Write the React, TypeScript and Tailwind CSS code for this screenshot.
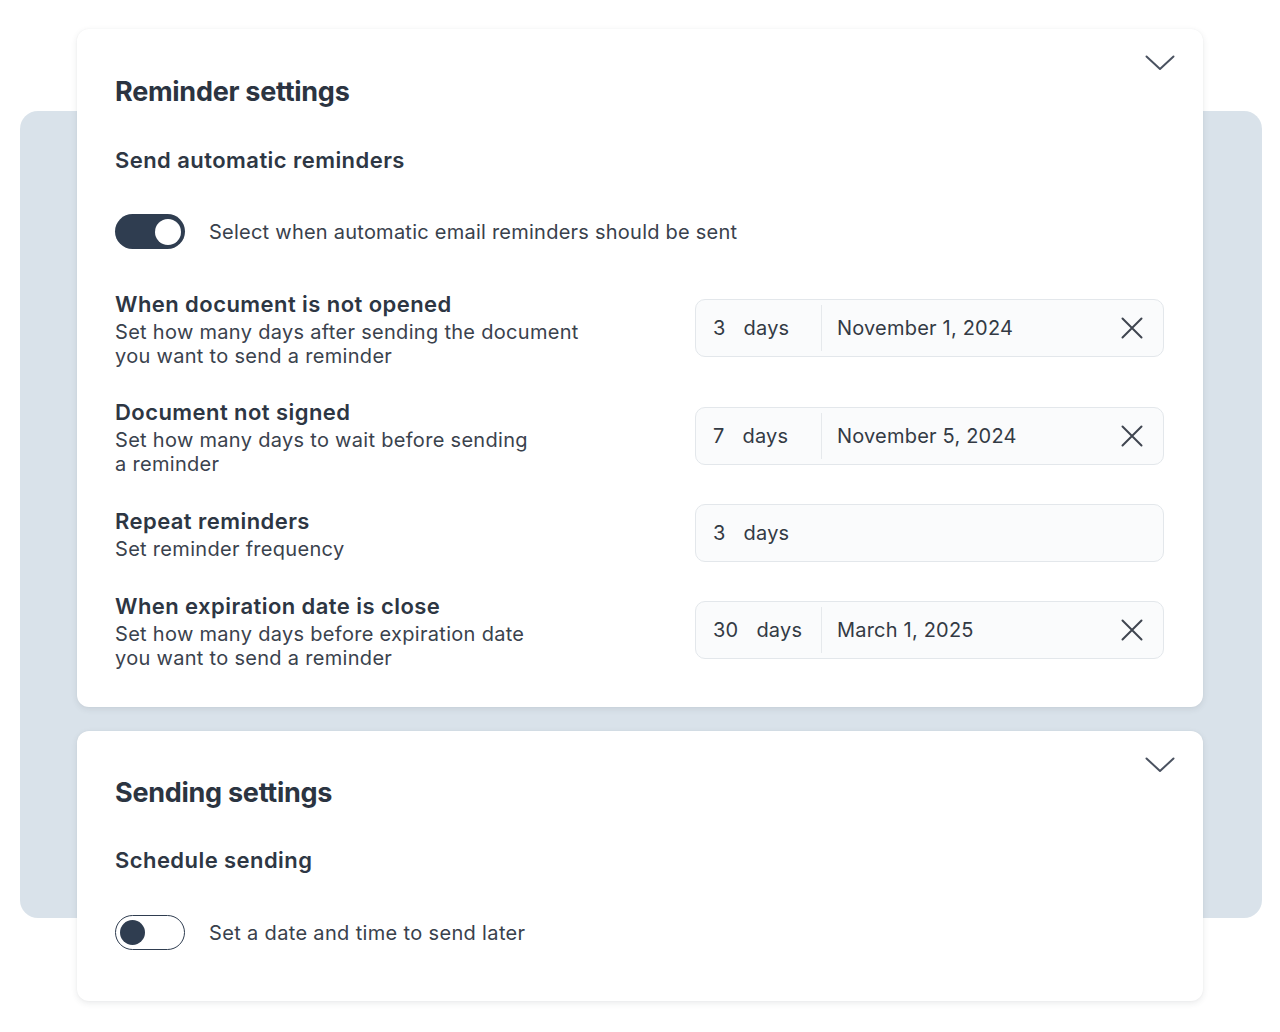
import React from 'react';

interface ReminderRow {
  title: string;
  lines: string[];
  count: string;
  date?: string;
}

const rows: ReminderRow[] = [
  {
    title: 'When document is not opened',
    lines: ['Set how many days after sending the document', 'you want to send a reminder'],
    count: '3',
    date: 'November 1, 2024',
  },
  {
    title: 'Document not signed',
    lines: ['Set how many days to wait before sending', 'a reminder'],
    count: '7',
    date: 'November 5, 2024',
  },
  {
    title: 'Repeat reminders',
    lines: ['Set reminder frequency'],
    count: '3',
  },
  {
    title: 'When expiration date is close',
    lines: ['Set how many days before expiration date', 'you want to send a reminder'],
    count: '30',
    date: 'March 1, 2025',
  },
];

const Chevron = () => (
  <svg width="30" height="16" viewBox="0 0 30 16" fill="none" className="absolute right-[28px] top-[26px]">
    <path d="M1.5 1.5 L15 14 L28.5 1.5" stroke="#4a5260" strokeWidth="2" strokeLinecap="round" strokeLinejoin="round" />
  </svg>
);

const CloseIcon = () => (
  <svg width="22" height="22" viewBox="0 0 22 22" fill="none">
    <path d="M1.5 1.5 L20.5 20.5 M20.5 1.5 L1.5 20.5" stroke="#3f4550" strokeWidth="2" strokeLinecap="round" />
  </svg>
);

const Toggle: React.FC<{ on: boolean }> = ({ on }) =>
  on ? (
    <div className="w-[70px] h-[35px] rounded-full bg-[#2f3d50] flex items-center justify-end pr-[4px] shrink-0">
      <div className="w-[26px] h-[26px] rounded-full bg-white" />
    </div>
  ) : (
    <div className="w-[70px] h-[35px] rounded-full bg-white border-[1.5px] border-[#2f3d50] flex items-center pl-[4px] shrink-0">
      <div className="w-[25px] h-[25px] rounded-full bg-[#2f3d50]" />
    </div>
  );

const DaysInput: React.FC<{ row: ReminderRow }> = ({ row }) => (
  <div className="w-[469px] h-[58px] rounded-[10px] border border-[#e3e7eb] bg-[#fafbfc] flex items-center text-[20px] text-[#333a44] tracking-[0.01em] shrink-0">
    <div className={'h-full flex items-center pl-[17px] gap-[18px] ' + (row.date ? 'w-[125px]' : '')}>
      <span>{row.count}</span>
      <span>days</span>
    </div>
    {row.date && (
      <>
        <div className="w-[1px] h-[46px] bg-[#e6e9ec]" />
        <div className="flex-1 flex items-center justify-between pl-[15px] pr-[20px]">
          <span>{row.date}</span>
          <CloseIcon />
        </div>
      </>
    )}
  </div>
);

export default function App() {
  return (
    <div className="min-h-[1032px] bg-white font-['Inter',sans-serif] text-[#2d3643]">
      <div className="relative pt-[29px] pl-[77px] pb-[30px]">
        <div className="absolute left-[20px] top-[111px] w-[1242px] h-[807px] rounded-[18px] bg-[#d9e2ea]" />

        <div className="relative w-[1126px] h-[678px] rounded-[12px] bg-white shadow-[0_2px_6px_rgba(40,50,60,0.10),0_0_2px_rgba(0,0,0,0.04)] pl-[38px] pr-[39px] pt-[45px]">
          <Chevron />
          <h1 className="text-[27px] leading-[36px] font-bold tracking-[-0.01em] text-[#2b3441]">Reminder settings</h1>
          <h2 className="mt-[35px] text-[22px] leading-[30px] font-semibold tracking-[0.02em] text-[#2e3744]">Send automatic reminders</h2>
          <div className="mt-[39px] flex items-center gap-[24px]">
            <Toggle on />
            <span className="text-[20px] tracking-[0.012em] text-[#39414c]">Select when automatic email reminders should be sent</span>
          </div>

          <div className="mt-[39px] flex flex-col gap-[28px]">
            {rows.map((row, i) => (
              <div key={i} className="flex items-center justify-between">
                <div>
                  <div className="text-[22px] leading-[32px] font-semibold tracking-[0.02em] text-[#2d3643]">{row.title}</div>
                  {row.lines.map((l, j) => (
                    <div key={j} className="text-[20px] leading-[24px] tracking-[0.015em] text-[#3a424d]">{l}</div>
                  ))}
                </div>
                <DaysInput row={row} />
              </div>
            ))}
          </div>
        </div>

        <div className="relative mt-[24px] w-[1126px] h-[270px] rounded-[12px] bg-white shadow-[0_2px_6px_rgba(40,50,60,0.10),0_0_2px_rgba(0,0,0,0.04)] pl-[38px] pr-[39px] pt-[44px]">
          <Chevron />
          <h1 className="text-[27px] leading-[36px] font-bold tracking-[-0.01em] text-[#2b3441]">Sending settings</h1>
          <h2 className="mt-[34px] text-[22px] leading-[30px] font-semibold tracking-[0.02em] text-[#2e3744]">Schedule sending</h2>
          <div className="mt-[40px] flex items-center gap-[24px]">
            <Toggle on={false} />
            <span className="text-[20px] tracking-[0.017em] text-[#39414c]">Set a date and time to send later</span>
          </div>
        </div>
      </div>
    </div>
  );
}
